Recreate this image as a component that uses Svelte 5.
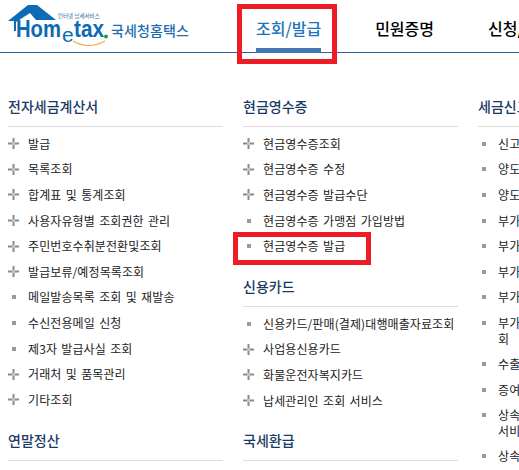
<script>
  const col1 = [
    { title: "전자세금계산서", items: [
      ["발급", 1], ["목록조회", 1], ["합계표 및 통계조회", 1], ["사용자유형별 조회권한 관리", 1],
      ["주민번호수취분전환및조회", 1], ["발급보류/예정목록조회", 1], ["메일발송목록 조회 및 재발송", 0],
      ["수신전용메일 신청", 0], ["제3자 발급사실 조회", 0], ["거래처 및 품목관리", 1], ["기타조회", 1],
    ] },
    { title: "연말정산", items: [] },
  ];
  const col2 = [
    { title: "현금영수증", items: [
      ["현금영수증조회", 1], ["현금영수증 수정", 1], ["현금영수증 발급수단", 1],
      ["현금영수증 가맹점 가입방법", 0], ["현금영수증 발급", 0],
    ] },
    { title: "신용카드", items: [
      ["신용카드/판매(결제)대행매출자료조회", 0], ["사업용신용카드", 1], ["화물운전자복지카드", 1], ["납세관리인 조회 서비스", 1],
    ] },
    { title: "국세환급", items: [] },
  ];
  const col3 = [
    { title: "세금신고납부", items: [
      ["신고서조회", 0], ["양도소득세 조회", 0], ["양도소득세 계산", 0], ["부가가치세 조회", 0],
      ["부가가치세 신고", 0], ["부가가치세 납부", 0], ["부가가치세 환급", 0],
      ["부가가치세 예정고지세액 조회", 0, "회"],
      ["수출실적 조회", 0], ["증여세 조회", 0], ["상속증여 재산평가", 0, "서비스"], ["상속세 조회", 0],
    ] },
  ];
  const cols = [col1, col2, col3];
  const nav = ["조회/발급", "민원증명", "신청/제출"];
</script>

<div class="page">
  <header class="top">
    <a class="logo" href="#home" aria-label="Hometax">
      <svg width="104" height="48" viewBox="0 0 104 48">
        <path d="M4 18 L24 2 L33 2 L52 17 L32 17 L26 10 L12 19 L12 28 L10 28 L10 18 Z" fill="#0d6ab5"/>
        <text x="12" y="34" class="lg-a" textLength="45" lengthAdjust="spacingAndGlyphs">Hom</text>
        <text x="58" y="39" class="lg-e">e</text>
        <text x="70" y="34" class="lg-a" textLength="30" lengthAdjust="spacingAndGlyphs">tax</text>
        <circle cx="102" cy="33.5" r="2" fill="#1c9a3c"/>
        <path d="M69 38 Q85 47 101 38" fill="none" stroke="#f2a93b" stroke-width="1.2"/>
        <text x="54" y="15" class="lg-s">인터넷 납세서비스</text>
      </svg>
      <span class="logo-name">국세청홈택스</span>
    </a>
    <nav class="nav">
      {#each nav as n, i}
        <a class="nav-item" class:on={i === 0} href="#m">{n}</a>
      {/each}
    </nav>
  </header>

  <div class="cols">
    {#each cols as col}
      <div class="col">
        {#each col as sec}
          <section class="sec">
            <h3>{sec.title}</h3>
            <ul>
              {#each sec.items as [label, sub, more]}
                <li class:tall={more}>
                  <span class="mark">
                    {#if sub}
                      <svg width="11" height="11" viewBox="0 0 11 11">
                        <path d="M4.5 0h2v4h-2zM4.5 7h2v4h-2zM0 4.5h4v2H0zM7 4.5h4v2H7z" fill="#8a8a8a"/>
                        <path d="M4 4h3v3H4z" fill="#c4c4c4"/>
                      </svg>
                    {:else}
                      <i></i>
                    {/if}
                  </span>
                  <span class="label">{label}{#if more}<br />{more}{/if}</span>
                </li>
              {/each}
            </ul>
          </section>
        {/each}
      </div>
    {/each}
  </div>

  <div class="mark-box nav-box"></div>
  <div class="mark-box item-box"></div>
</div>

<style>
  :global(body) {
    margin: 0;
    background: #fff;
  }
  .page {
    position: relative;
    width: 519px;
    height: 470px;
    overflow: hidden;
    font-family: "Noto Sans CJK KR", "Liberation Sans", sans-serif;
    color: #222;
  }
  .top {
    display: flex;
    height: 52px;
    border-bottom: 1px solid #2d5f9a;
  }
  .logo {
    display: flex;
    width: 243px;
    padding-left: 4px;
    box-sizing: border-box;
    text-decoration: none;
    flex: none;
  }
  .logo svg {
    margin-top: 3px;
    overflow: visible;
    flex: none;
  }
  .lg-a {
    font: 700 23px "Liberation Sans", sans-serif;
    fill: #0d6ab5;
  }
  .lg-e {
    font: 400 21px "Liberation Sans", sans-serif;
    fill: #0d6ab5;
  }
  .lg-s {
    font: 400 5.5px "Noto Sans CJK KR", sans-serif;
    fill: #2a6cb0;
  }
  .logo-name {
    margin: 21px 0 0 3px;
    font-size: 14px;
    line-height: 18px;
    font-weight: 500;
    color: #1c6eb0;
    letter-spacing: 0.1px;
    white-space: nowrap;
  }
  .nav {
    display: flex;
    gap: 54px;
    padding-left: 13px;
  }
  .nav-item {
    height: 52px;
    box-sizing: border-box;
    padding-top: 16px;
    font-size: 16px;
    line-height: 24px;
    font-weight: 500;
    color: #000;
    text-decoration: none;
    white-space: nowrap;
  }
  .nav-item.on {
    color: #1b75bb;
    border-bottom: 5px solid #4577b5;
    margin-bottom: -1px;
    height: 53px;
  }
  .cols {
    display: flex;
    padding: 43px 0 0 8px;
  }
  .col {
    width: 215px;
    margin-right: 20px;
    flex: none;
  }
  .sec {
    margin-bottom: 17px;
  }
  h3 {
    margin: 0;
    height: 30px;
    border-bottom: 1px solid #ddd;
    font-size: 14px;
    line-height: 20px;
    font-weight: 500;
    color: #1a3a66;
  }
  ul {
    list-style: none;
    margin: 0;
    padding: 4px 0 0;
  }
  li {
    display: flex;
    align-items: center;
    height: 25.6px;
    font-size: 12px;
    letter-spacing: 0.1px;
    word-spacing: 1.5px;
    white-space: nowrap;
  }
  li.tall {
    height: 41px;
    align-items: flex-start;
    padding-top: 5px;
    box-sizing: border-box;
  }
  li.tall .mark {
    height: 16px;
  }
  .label {
    line-height: 16px;
  }
  .mark {
    display: flex;
    width: 20px;
    flex: none;
    align-items: center;
  }
  .mark i {
    width: 4px;
    height: 4px;
    margin-left: 4px;
    background: #999;
  }
  .mark-box {
    position: absolute;
    border: 5px solid #ee1c25;
    box-sizing: border-box;
  }
  .nav-box {
    left: 237px;
    top: 4px;
    width: 100px;
    height: 60px;
  }
  .item-box {
    left: 233px;
    top: 232px;
    width: 138px;
    height: 33px;
  }
</style>
